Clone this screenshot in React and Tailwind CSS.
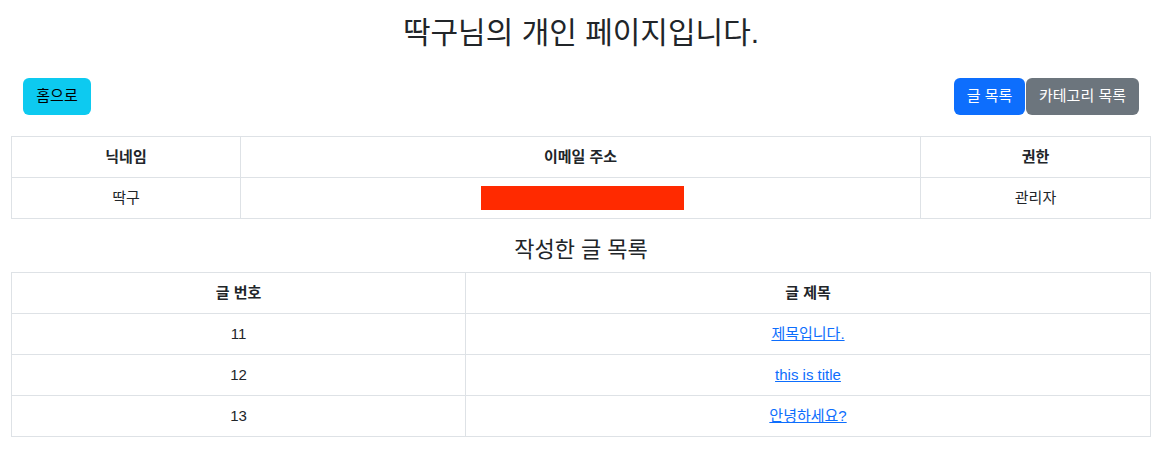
const font = { fontFamily: '"Liberation Sans", "Noto Sans CJK KR", sans-serif' };

const posts = [
  { id: 11, title: '제목입니다.' },
  { id: 12, title: 'this is title' },
  { id: 13, title: '안녕하세요?' },
];

export default function App() {
  const th = 'border border-[#dee2e6] px-2 py-2 leading-6 font-bold text-[15px]';
  const td = 'border border-[#dee2e6] px-2 py-2 leading-6 text-[15px]';

  return (
    <div className="w-[1162px] h-[466px] bg-white text-[#212529]" style={font}>
      <h2 className="pt-[14px] text-center text-[30px] leading-[38px] font-normal">딱구님의 개인 페이지입니다.</h2>

      <div className="flex items-center justify-between mt-[26px] px-[23px] mb-[21px]">
        <button className="h-[37px] w-[68px] rounded-md bg-[#0dcaf0] text-black text-[15px]">홈으로</button>
        <div className="flex">
          <button className="h-[37px] w-[71px] rounded-md bg-[#0d6efd] text-white text-[15px]">글 목록</button>
          <button className="h-[37px] w-[113px] ml-[1px] rounded-md bg-[#6c757d] text-white text-[15px]">카테고리 목록</button>
        </div>
      </div>

      <div className="px-[11px]">
        <table className="w-full border-collapse text-center table-fixed">
          <thead>
            <tr>
              <th className={`${th} w-[229px]`}>닉네임</th>
              <th className={th}>이메일 주소</th>
              <th className={`${th} w-[230px]`}>권한</th>
            </tr>
          </thead>
          <tbody>
            <tr>
              <td className={td}>딱구</td>
              <td className={td}>
                <div className="flex justify-center">
                  <div className="ml-[4px] h-[24px] w-[203px] bg-[#ff2a00]" />
                </div>
              </td>
              <td className={td}>관리자</td>
            </tr>
          </tbody>
        </table>

        <h4 className="mt-[16px] mb-[8px] text-center text-[22px] leading-[29px] font-normal">작성한 글 목록</h4>

        <table className="w-full border-collapse text-center table-fixed">
          <thead>
            <tr>
              <th className={`${th} w-[454px]`}>글 번호</th>
              <th className={th}>글 제목</th>
            </tr>
          </thead>
          <tbody>
            {posts.map((p) => (
              <tr key={p.id}>
                <td className={td}>{p.id}</td>
                <td className={td}>
                  <a href="#" className="text-[#0d6efd] underline">{p.title}</a>
                </td>
              </tr>
            ))}
          </tbody>
        </table>
      </div>
    </div>
  );
}
